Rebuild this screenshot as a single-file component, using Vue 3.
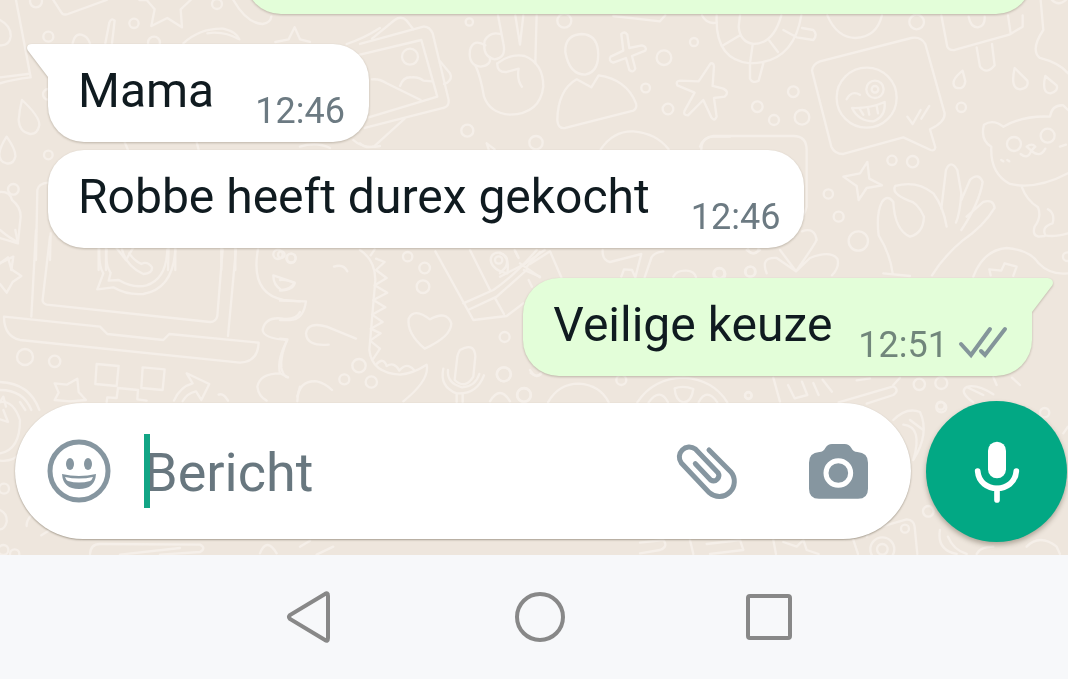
<script setup>
import { ref } from 'vue'

const draft = ref('')

const messages = [
  { id: 1, side: 'out', text: '', time: '', tail: false },
  { id: 2, side: 'in', text: 'Mama', time: '12:46', tail: true },
  { id: 3, side: 'in', text: 'Robbe heeft durex gekocht', time: '12:46', tail: false },
  { id: 4, side: 'out', text: 'Veilige keuze', time: '12:51', tail: true }
]

// Wallpaper doodles, drawn at three times their size and grouped by region.
const doodles = [
  {
    x: 0,
    y: 0,
    dots: [[402, 70, 14], [145, 110, 15], [145, 283, 16], [145, 465, 13], [40, 568, 16], [108, 4, 18], [651, 12, 15], [462, 128, 18]],
    paths: [
      'M48 0L92 232Q40 238 0 250M0 232L84 222',
      'M0 60Q34 78 32 110Q28 138 0 136',
      'M66 300Q120 350 118 376Q112 404 90 402Q58 396 56 360Q58 330 66 300Z',
      'M20 410Q48 450 46 470Q40 494 20 490Q-2 486 -2 462Q0 440 20 410Z',
      'M160 0L186 40Q192 46 204 42L320 0',
      'M316 130L328 68Q334 52 344 62L336 130',
      'M218 130Q224 100 244 104Q262 108 270 130',
      'M418 0L440 0L464 28L454 78L502 54L546 82L542 28L572 0',
      'M550 130Q600 84 670 86Q710 96 718 118Q670 92 622 100',
      'M700 0Q740 70 788 72Q812 68 814 50',
      'M826 126L866 118L884 82L900 118L930 126',
      'M1040 132Q1090 116 1140 84',
      'M1060 420Q1090 448 1140 438',
      'M0 576Q30 574 36 600Q62 620 62 650L54 726Q30 716 0 690',
      'M108 780L112 570Q116 550 144 548M150 780L152 700',
      'M0 790L40 770L34 810',
      'M296 740V810M318 740V810M506 740L504 810M526 740V810M350 745L378 780L400 742M664 740V810M706 740V810',
      'M374 426L384 450M590 426L596 450M900 440Q950 424 990 444'
    ]
  },
  {
    x: 360,
    y: 0,
    dots: [[328, 66, 11], [613, 62, 21], [912, 173, 22], [1002, 126, 12], [857, 264, 13], [924, 327, 16], [322, 392, 18], [150, 170, 24], [528, 428, 20]],
    paths: [
      'M0 132L190 80Q208 78 218 100L266 300Q268 320 250 324L14 384',
      'M0 164L184 120L232 290L26 352',
      'M36 116L104 60Q124 46 140 62L160 88M240 184L270 220Q278 236 262 248L252 252',
      'M36 238Q60 236 80 250L182 300M120 258Q130 230 154 232Q176 230 190 242L216 244',
      'M0 430Q20 448 44 438L134 356',
      'M414 46L430 130Q440 174 404 178Q366 170 374 122Q390 94 420 102',
      'M376 136Q340 114 330 150Q324 196 362 200Q394 196 390 172',
      'M412 190Q450 160 494 168Q550 190 550 260Q540 342 450 344Q390 340 372 290Q362 230 346 196',
      'M412 190Q410 218 440 216L476 206Q470 240 486 260',
      'M466 46L480 134L490 46M530 46L526 190',
      'M666 102Q614 104 616 156Q628 224 676 224Q720 214 714 150Q708 104 666 102Z',
      'M650 238Q594 270 592 360Q594 388 616 384L820 332Q832 326 828 310Q800 238 716 226L694 262Z',
      'M784 102Q794 92 802 104L808 144L846 136Q862 140 856 152L816 168L826 206Q820 220 808 210L798 174L760 188Q744 182 752 170L790 152Z',
      'M1052 190Q1062 188 1062 200L1058 258L1090 266Q1110 276 1094 290L1062 294L1070 350Q1064 366 1054 352L1030 300L984 346Q968 346 974 332L1004 278L952 256Q946 244 960 242L1016 244Z',
      'M722 448Q760 392 820 394Q890 400 926 448',
      'M1024 450Q1024 412 1060 410H1110',
      'M380 430L386 448M380 430L404 448M760 48L900 64L916 46M1026 46Q1040 74 1070 68'
    ]
  },
  {
    x: 700,
    y: 0,
    dots: [[650, 66, 22], [280, 275, 16], [172, 320, 16], [222, 360, 15], [306, 352, 22], [784, 322, 14], [576, 481, 14], [638, 485, 17], [385, 582, 14], [416, 650, 15], [475, 723, 29], [500, 293, 90], [525, 268, 26], [525, 268, 10], [58, 820, 15], [150, 815, 15], [942, 432, 21], [1043, 407, 21], [1102, 770, 13]],
    paths: [
      'M50 46Q44 180 150 190Q280 190 304 46M116 80Q120 126 160 132Q220 132 244 46M116 80L120 46M70 136L120 106M158 134L150 190M208 122L234 156M250 90L290 112L340 120Q354 104 340 90L306 84M150 190V236Q158 252 176 242L190 190',
      'M382 46Q410 112 466 114Q530 112 546 46',
      'M336 212Q338 192 360 184L634 114Q662 108 676 132L734 340Q736 366 690 388L706 442Q704 454 692 450L610 412L430 462Q404 462 394 440Z',
      'M440 298Q454 270 480 284M456 324Q510 326 554 306Q558 350 520 364Q476 364 456 324ZM480 328L490 344M504 324L508 344M530 318L534 340',
      'M622 350L638 372L662 330M664 356L688 318',
      'M724 46L742 140Q748 152 764 150L928 104L968 80V46M924 46L932 100M806 50Q812 82 834 82Q856 78 854 50',
      'M830 142L840 200Q860 226 884 196L876 132',
      'M788 212Q748 244 766 262Q792 272 796 244Z M944 204Q930 266 960 268Q988 264 982 242Z M1036 228Q1024 280 1052 280Q1076 274 1070 256Z',
      'M1022 0L1030 90Q990 150 1020 174Q1080 190 1104 220',
      'M910 380Q880 356 852 374Q840 420 874 440Q870 520 930 552Q1010 570 1104 520M910 380Q970 346 1050 350Q1056 314 1090 316L1104 330',
      'M980 440Q996 428 1006 440L994 452ZM994 452Q984 480 962 462M994 452Q1020 476 1036 446M904 480L910 484M922 480L928 484M1080 440L1098 434',
      'M966 562Q980 600 1014 622Q1026 650 1004 680Q996 706 1016 710L1034 708M1044 628Q1066 640 1058 670Q1024 680 1036 706Q1060 712 1104 700',
      'M430 530L480 520L502 486L508 536L546 556L500 564L476 600L470 558Z',
      'M0 440Q10 412 40 408H280Q320 408 320 450V620Q312 650 300 650',
      'M578 820Q570 760 536 706Q528 640 546 606Q562 582 580 606Q584 690 630 710Q670 700 672 650Q652 606 626 602Q572 580 586 558Q650 540 700 580Q730 620 740 680',
      'M724 626L738 510Q752 476 772 510L784 580Q780 640 768 668M784 600L810 540Q836 516 848 546Q838 610 784 690M800 650L850 606Q880 596 884 624Q850 680 790 720Q730 770 696 826M550 820L630 828',
      'M240 750L288 814Q340 740 350 720Q344 680 306 694M288 814L330 774Q390 750 412 776Q420 800 396 826M200 820Q180 770 230 774L288 814',
      'M820 830Q850 750 920 744Q990 750 1016 790Q1050 826 1104 820M872 826L868 808L904 812L914 790L950 800L940 828',
      'M140 750Q160 770 180 750M1056 0Q1076 20 1098 0'
    ]
  },
  {
    x: 0,
    y: 230,
    dots: [[75, 381, 24], [164, 394, 17], [834, 73, 14], [873, 85, 14]],
    paths: [
      'M108 0L94 260M150 20L128 208Q126 220 140 224L630 276Q648 276 652 258L668 58M708 58L684 318',
      'M12 260L300 290L322 312L490 330L508 312L776 338Q774 396 720 398L60 330Q12 318 12 260Z',
      'M298 58Q296 110 310 130L292 178L340 172Q380 196 430 192Q520 176 526 58M320 58Q316 110 332 128L326 152L356 150Q400 176 440 166Q500 146 502 58M366 58Q380 110 430 132Q458 130 456 112Q442 92 424 102Q400 90 388 70',
      'M0 100L24 82L34 118L64 138L38 156L20 188L0 162',
      'M0 24L54 40L46 0',
      'M774 58Q750 190 850 210L900 214M820 136L884 158Q870 180 844 180Q820 166 820 136Z',
      'M900 246Q890 270 850 266Q796 258 788 300Q790 326 862 330Q830 390 840 430L864 442M840 430Q780 430 772 470Q776 500 800 512M900 470L892 500',
      'M290 402L356 408L350 468L286 462ZM428 412L494 418L488 480L424 474ZM320 516L322 502L350 504L354 474L414 480L412 508L440 512',
      'M164 460L200 464L232 446L236 486L258 510L210 514L164 510L176 488Z',
      'M522 512Q540 470 578 460L560 430L628 462L604 510L588 484Q560 490 548 514M656 494Q670 488 684 512',
      'M0 456Q90 460 118 540M0 480Q70 480 94 540M0 516L10 500L18 530M76 540L60 516'
    ]
  },
  {
    x: 280,
    y: 240,
    dots: [[34, 54, 13], [383, 50, 14], [434, 84, 16], [429, 140, 19], [674, 291, 15], [237, 377, 20], [193, 418, 15], [274, 426, 17], [671, 403, 21], [732, 465, 20], [656, 60, 11], [4, 44, 10]],
    paths: [
      'M240 30Q286 60 286 120L268 330Q276 400 360 404Q400 400 440 374Q450 420 370 484M272 46L284 28',
      'M288 56L314 66L288 90L320 114L284 136L322 158L280 180L316 202L276 224L308 246L272 266L302 280L270 302L300 326L280 356M290 372Q310 350 320 378Q344 364 358 392Q380 364 402 390',
      'M162 80Q190 70 202 94',
      'M0 120Q20 118 44 130Q40 150 0 152M0 182L78 184Q70 240 30 240H0',
      'M228 296L140 260Q84 244 78 280Q80 320 146 314M0 296L22 298Q0 350 4 384Q10 410 24 412',
      'M434 326Q380 280 386 236Q402 202 450 238Q500 210 514 250Q514 290 434 326Z',
      'M540 330Q584 306 586 350L580 410Q556 450 524 420L532 350Q534 340 540 330ZM490 386Q478 440 530 460Q590 464 612 406M504 390Q500 430 546 442Q586 440 598 402M530 460V486M548 460V486',
      'M466 34L580 240L680 228L730 190M550 190L640 150Q700 110 770 30M564 210L650 170L740 90M570 30L630 150M704 30L716 54M732 90L780 110M740 80L780 36M646 176L672 222',
      'M632 60Q634 36 660 38Q690 50 682 100Q636 90 632 60ZM52 484Q54 420 110 424Q136 430 156 450M630 484Q660 434 690 484M750 390Q770 420 782 400M746 120L756 140'
    ]
  },
  {
    x: 500,
    y: 365,
    dots: [[12, 28, 21], [72, 90, 21], [364, 45, 15], [745, 92, 10], [1258, 58, 17], [1324, 54, 18], [1322, 122, 12]],
    paths: [
      'M144 112Q176 56 236 56Q300 60 326 112M412 112Q460 40 550 38Q640 44 682 112M524 70Q550 60 580 72Q574 112 550 112Q526 106 524 70ZM446 112Q480 66 504 112M596 112Q620 66 652 112',
      'M820 38L840 110M864 60L884 100L922 90L906 50M940 54L956 90M968 44L996 80M1016 112L1180 64Q1200 76 1180 90L1100 116M1070 46L1110 40M1180 60L1200 38',
      'M1450 90L1400 66Q1376 80 1420 112M1400 66Q1430 56 1480 88M92 24Q110 40 124 26M1480 36L1490 60M1536 38L1560 60'
    ]
  },
  {
    x: 500,
    y: 240,
    dots: [[658, 102, 18], [752, 95, 15], [760, 24, 16]],
    paths: [
      'M308 30Q306 60 330 66L424 42L406 112M490 34Q456 38 452 60L434 112M364 110L372 88L396 90L406 112M520 110Q530 90 560 92Q584 94 588 112',
      'M0 110L74 72L134 30M60 70L120 112M90 72L150 34L184 112M0 40Q30 46 18 80L0 100M46 34L54 50'
    ]
  },
  {
    x: 0,
    y: 390,
    dots: [[12, 296, 15], [10, 480, 15], [44, 492, 14]],
    paths: [
      'M0 36Q40 30 60 90Q60 180 0 190M0 212Q40 216 60 190M0 88L24 96L10 60',
      'M0 360Q22 370 20 396Q14 418 0 418M80 408Q78 390 100 370M124 436L150 420M270 492Q272 462 300 462L600 464Q620 474 600 486L480 494M360 494L540 474M780 490Q800 440 830 490M900 470L930 452M950 494L1000 470'
    ]
  },
  {
    x: 640,
    y: 390,
    dots: [[325, 16, 10], [904, 52, 15], [865, 364, 16], [795, 416, 12], [727, 478, 36], [727, 478, 16], [1214, 68, 14]],
    paths: [
      'M760 90Q800 50 840 66Q870 130 820 210Q850 110 790 104M810 90L850 120',
      'M690 420L800 388Q822 390 824 410L832 492M690 420L680 440M640 450L654 492',
      'M900 420Q890 480 950 492M924 440Q940 480 980 492M1160 470Q1200 430 1250 470L1260 492M1010 492Q1020 470 1060 470',
      'M0 458L70 450Q86 470 60 480L0 490M150 450L160 492M200 462L300 450L310 480L210 492M400 450L408 492M430 456L470 470L490 450L500 480L536 492M1230 200Q1270 260 1284 270M1270 130L1284 110'
    ]
  }
]
</script>

<template>
  <main class="phone">
    <section class="chat">
      <svg class="wallpaper" viewBox="0 0 1068 555" preserveAspectRatio="xMinYMin slice" aria-hidden="true">
        <g v-for="(d, i) in doodles" :key="i" :transform="`translate(${d.x} ${d.y}) scale(.3333)`">
          <path v-for="(p, j) in d.paths" :key="'p' + j" :d="p" />
          <circle v-for="(c, j) in d.dots" :key="'c' + j" :cx="c[0]" :cy="c[1]" :r="c[2]" />
        </g>
      </svg>

      <div class="messages">
        <article v-for="m in messages" :key="m.id" class="bubble" :class="[m.side, { first: m.tail, long: !m.text }]">
          <svg v-if="m.tail && m.side === 'in'" class="tail" viewBox="0 0 24 34" aria-hidden="true">
            <path d="M24 0H6Q1 0 1 4Q1 6 3 8L22 33H24Z" />
          </svg>
          <svg v-if="m.tail && m.side === 'out'" class="tail" viewBox="0 0 24 34" aria-hidden="true">
            <path d="M0 0H18Q23 1 23 5Q23 7 21 9L2 34H0Z" />
          </svg>
          <p v-if="m.text" class="text">{{ m.text }}</p>
          <time v-if="m.time" class="time">{{ m.time }}</time>
          <svg v-if="m.text && m.side === 'out'" class="checks" viewBox="0 0 50 34" role="img" aria-label="Afgeleverd">
            <path d="M3 18L13 29L32 3M23 25L27 29L47 3" />
          </svg>
        </article>
      </div>

      <form class="composer" @submit.prevent>
        <div class="field">
          <button type="button" class="icon emoji" aria-label="Emoji">
            <svg viewBox="0 0 64 64">
              <circle cx="32" cy="32" r="29" fill="none" stroke="currentColor" stroke-width="5" />
              <ellipse cx="23" cy="25" rx="4" ry="6" fill="currentColor" />
              <ellipse cx="41" cy="25" rx="4" ry="6" fill="currentColor" />
              <path d="M15 35Q32 39 49 35Q48 50 32 50Q16 50 15 35Z" fill="currentColor" />
              <path d="M18 38Q32 41 46 38Q45 41 43 42Q32 45 21 42Q19 41 18 38Z" fill="#fff" />
            </svg>
          </button>
          <div class="entry">
            <input v-model="draft" type="text" placeholder="Bericht" aria-label="Bericht" />
            <span class="caret"></span>
          </div>
          <button type="button" class="icon clip" aria-label="Bijlage">
            <svg viewBox="99 153 198 183">
              <path d="M207 180L272 245A45 45 0 0 1 208 308L124 219A30 30 0 0 1 166 177L234 248A16 16 0 0 1 212 270L166 221" fill="none" stroke="currentColor" stroke-width="15" stroke-linecap="round" stroke-linejoin="round" />
            </svg>
          </button>
          <button type="button" class="icon camera" aria-label="Camera">
            <svg viewBox="504 153 183 171">
              <path d="M576 156H614Q627 156 634 168Q640 180 652 180Q684 182 684 212V290Q684 320 654 320H537Q507 320 507 290V212Q507 182 538 180Q550 180 556 168Q563 156 576 156Z" fill="currentColor" />
              <circle cx="595" cy="243" r="37" fill="none" stroke="#fff" stroke-width="15" />
            </svg>
          </button>
        </div>
        <button type="button" class="mic" aria-label="Spraakbericht">
          <svg viewBox="1002 150 138 192">
            <rect x="1044" y="155" width="54" height="110" rx="27" fill="#fff" />
            <path d="M1013 243C1018 312 1124 312 1129 243" fill="none" stroke="#fff" stroke-width="17" stroke-linecap="round" />
            <path d="M1071 296V330" stroke="#fff" stroke-width="17" stroke-linecap="round" />
          </svg>
        </button>
      </form>
    </section>

    <nav class="system" aria-label="Systeemnavigatie">
      <button type="button" aria-label="Terug">
        <svg viewBox="0 0 60 60"><path d="M45 7Q48 5 48 9V51Q48 55 45 53L10 32Q8 30 10 28Z" /></svg>
      </button>
      <button type="button" aria-label="Startscherm">
        <svg viewBox="0 0 60 60"><circle cx="30" cy="30" r="23" /></svg>
      </button>
      <button type="button" aria-label="Recente apps">
        <svg viewBox="0 0 60 60"><rect x="8" y="9" width="42" height="42" rx="2" /></svg>
      </button>
    </nav>
  </main>
</template>

<style>
body {
  background: #f7f8fa;
}
</style>

<style scoped>
.phone {
  display: flex;
  flex-direction: column;
  min-height: 100vh;
  font-family: Roboto, "Liberation Sans", sans-serif;
}

.chat {
  position: relative;
  display: flex;
  flex: 1 1 0;
  flex-direction: column;
  overflow: hidden;
  background: #eee6dd;
}

.wallpaper {
  position: absolute;
  inset: 0;
  width: 100%;
  height: 100%;
  fill: none;
  stroke: #f5efe9;
  stroke-width: 7;
  stroke-linecap: round;
  stroke-linejoin: round;
}

.messages {
  position: relative;
  display: flex;
  flex: 1 1 0;
  flex-direction: column;
  justify-content: flex-end;
  min-height: 0;
  padding: 0 36px 25px 48px;
}

.bubble {
  position: relative;
  display: flex;
  flex: none;
  align-items: flex-end;
  box-sizing: border-box;
  min-height: 98px;
  padding: 19px 24px 10px 30px;
  border-radius: 36px;
  filter: drop-shadow(0 1px 1px rgba(60, 50, 30, 0.28));
}

.in {
  align-self: flex-start;
  margin-top: 8px;
  gap: 41px;
  background: #fff;
  fill: #fff;
}

.out {
  align-self: flex-end;
  gap: 26px;
  background: #e3fed9;
  fill: #e3fed9;
}

.first {
  margin-top: 30px;
}

.in.first {
  border-top-left-radius: 0;
}

.out.first {
  border-top-right-radius: 0;
}

.long {
  width: 80%;
}

.tail {
  position: absolute;
  top: 0;
  width: 24px;
  height: 34px;
}

.in .tail {
  right: calc(100% - 2px);
}

.out .tail {
  left: calc(100% - 2px);
}

.text {
  margin: 0 0 13px;
  color: #101b20;
  font-size: 48px;
  line-height: 56px;
}

.time {
  color: #6c7a82;
  font-size: 36px;
  line-height: 42px;
}

.out .time {
  color: #71867b;
}

.checks {
  width: 50px;
  height: 34px;
  margin: 0 0 6px -16px;
  fill: none;
  stroke: #84959a;
  stroke-width: 4;
  stroke-linecap: round;
}

.composer {
  position: relative;
  display: flex;
  align-items: center;
  gap: 15px;
  padding: 0 1px 13px 15px;
}

.field {
  display: flex;
  flex: 1;
  align-items: center;
  box-sizing: border-box;
  min-width: 0;
  height: 136px;
  margin-bottom: 1px;
  padding: 0 42px 0 32px;
  border-radius: 68px;
  background: #fff;
  box-shadow: 0 1px 2px rgba(60, 50, 30, 0.4);
}

button {
  display: flex;
  flex: none;
  align-items: center;
  justify-content: center;
  padding: 0;
  border: 0;
  background: none;
}

.icon {
  color: #8696a0;
}

.emoji svg {
  width: 64px;
  height: 64px;
}

.entry {
  position: relative;
  flex: 1;
  min-width: 0;
  margin-left: 33px;
}

.entry input {
  display: block;
  box-sizing: border-box;
  width: 100%;
  height: 74px;
  padding: 3px 0 0;
  border: 0;
  outline: 0;
  background: none;
  color: #101b20;
  font: 54px Roboto, "Liberation Sans", sans-serif;
}

.entry input::placeholder {
  color: #68777f;
  opacity: 1;
}

.caret {
  position: absolute;
  top: 0;
  bottom: 0;
  left: 0;
  width: 6px;
  background: #12a585;
}

.clip {
  margin-right: 69px;
}

.clip svg {
  width: 66px;
  height: 61px;
}

.camera svg {
  width: 61px;
  height: 57px;
}

.mic {
  width: 141px;
  height: 141px;
  border-radius: 50%;
  background: #02a884;
  box-shadow: 0 3px 5px rgba(60, 50, 30, 0.35);
}

.mic svg {
  width: 46px;
  height: 64px;
}

.system {
  display: flex;
  align-items: center;
  justify-content: center;
  gap: 170px;
  height: 124px;
  padding-left: 12px;
  background: #f7f8fa;
}

.system svg {
  width: 60px;
  height: 60px;
  fill: none;
  stroke: #888;
  stroke-width: 4;
}
</style>
